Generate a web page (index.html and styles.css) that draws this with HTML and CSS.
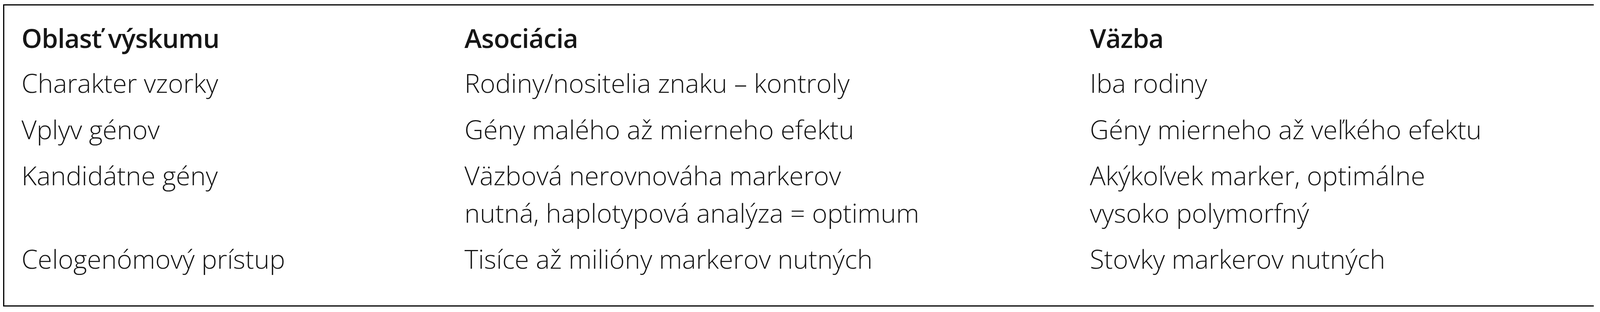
FILE: index.html
```html
<!DOCTYPE html>
<html lang="sk">
<head>
<meta charset="utf-8">
<title>Asociácia a väzba</title>
<link rel="stylesheet" href="styles.css">
</head>
<body>
<div class="table">
  <div class="row head">
    <div class="cell c1">Oblasť výskumu</div>
    <div class="cell c2">Asociácia</div>
    <div class="cell c3">Väzba</div>
  </div>
  <div class="row r1">
    <div class="cell c1">Charakter vzorky</div>
    <div class="cell c2">Rodiny/nositelia znaku – kontroly</div>
    <div class="cell c3">Iba rodiny</div>
  </div>
  <div class="row r2">
    <div class="cell c1">Vplyv génov</div>
    <div class="cell c2">Gény malého až mierneho efektu</div>
    <div class="cell c3">Gény mierneho až veľkého efektu</div>
  </div>
  <div class="row r3">
    <div class="cell c1">Kandidátne gény</div>
    <div class="cell c2">Väzbová nerovnováha markerov<br>nutná, haplotypová analýza = optimum</div>
    <div class="cell c3">Akýkoľvek marker, optimálne<br>vysoko polymorfný</div>
  </div>
  <div class="row r4">
    <div class="cell c1">Celogenómový prístup</div>
    <div class="cell c2">Tisíce až milióny markerov nutných</div>
    <div class="cell c3">Stovky markerov nutných</div>
  </div>
</div>
</body>
</html>
```

FILE: styles.css
```css
html, body {
  background: #ffffff;
}
body {
  margin: 11px 16px 0 8px;
  font-family: "Open Sans", "Noto Sans", sans-serif;
  color: #161616;
}
.table {
  box-sizing: border-box;
  width: 4128px;
  border: 3px solid #000;
  padding: 35px 0 72px 44px;
  font-size: 67px;
  line-height: 96px;
  font-weight: 300;
}
.row {
  display: grid;
  grid-template-columns: 1134px 1601px 1fr;
}
.head {
  font-weight: 600;
  letter-spacing: -1px;
  padding-bottom: 19px;
}
.r1 { padding-bottom: 23px; }
.r2 { padding-bottom: 22px; }
.r3 { padding-bottom: 22px; }
.cell {
  white-space: nowrap;
}
```
